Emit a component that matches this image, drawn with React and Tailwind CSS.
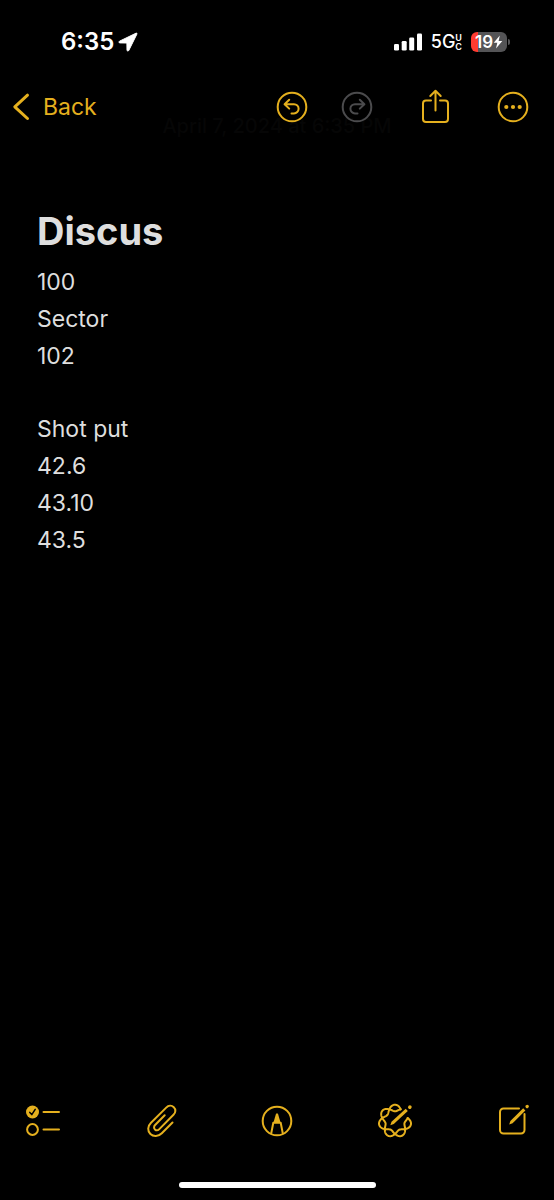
import React from "react";

const round = {
  fill: "none",
  stroke: "currentColor",
  strokeLinecap: "round",
  strokeLinejoin: "round",
  "aria-hidden": true,
};

// One strand of the braided ring; angles run clockwise from the top.
function strand(sign) {
  const points = [];
  for (let deg = 77; deg <= 386; deg += 3) {
    const t = (deg * Math.PI) / 180;
    const r = 13 + sign * 3.3 * Math.cos(3.5 * t);
    points.push(`${(18 + r * Math.sin(t)).toFixed(2)} ${(18 - r * Math.cos(t)).toFixed(2)}`);
  }
  return `M${points.join("L")}`;
}

function StatusBar() {
  return (
    <div className="flex h-20 items-center pt-1 pr-11 pl-[61px] text-white">
      <span className="text-2xl leading-6 font-semibold">6:35</span>
      <svg className="ml-1 size-5" viewBox="0 0 20 20" fill="currentColor" stroke="currentColor" strokeLinejoin="round" aria-hidden="true">
        <path d="M18 1.200 1.500 9.200c-.9.500-.7 1.700.4 1.700l7 .1.100 7.100c0 1.100 1.300 1.300 1.800.3L18.900 2.100C19.200 1.400 18.700.900 18 1.200Z" />
      </svg>
      <div className="ml-auto flex items-center">
        <svg className="h-5 w-7" viewBox="0 0 28 20" fill="currentColor" aria-label="Signal strength">
          <rect x="0" y="12" width="5" height="6.500" rx="1.300" />
          <rect x="7.700" y="9" width="5" height="9.500" rx="1.300" />
          <rect x="15.200" y="5.500" width="5" height="13" rx="1.300" />
          <rect x="23" y="1.500" width="5" height="17" rx="1.300" />
        </svg>
        <span className="ml-[9px] text-lg leading-5 font-medium">5G</span>
        <span className="flex flex-col text-[9px] leading-[9px] font-semibold">
          <span>U</span>
          <span>C</span>
        </span>
        <span className="ml-[9px] flex h-5 w-9 items-center justify-center rounded-md bg-linear-to-r from-[#ff3b30] from-20% to-[#545456] to-20% text-[17px] leading-5 font-semibold">
          19
          <svg className="h-4 w-[10px]" viewBox="0 0 10 16" fill="currentColor" aria-hidden="true">
            <path d="M6.800 1.500.700 8.700h3.600L3 14.500l6.300-7.400H5.600Z" />
          </svg>
        </span>
        <span className="ml-px h-[6px] w-[2px] rounded-r-full bg-[#545456]" />
      </div>
    </div>
  );
}

function NavBar() {
  return (
    <header className="flex h-[54px] items-center pr-[25px] pl-3">
      <button type="button" className="flex items-center gap-[13px] text-[23px] leading-8">
        <svg className="h-7 w-[18px]" viewBox="0 0 18 28" strokeWidth="3" {...round}>
          <path d="M15.500 2.200 2.800 13.800 15.500 25.500" />
        </svg>
        Back
      </button>
      <button type="button" aria-label="Undo" className="ml-auto">
        <svg className="size-8" viewBox="0 0 32 32" strokeWidth="2" {...round}>
          <circle cx="16" cy="16" r="14.300" />
          <path d="M13.200 8.800 8.600 13.200 13.200 17.600M9.200 13.200H18a4.600 4.600 0 0 1 0 9.200h-2.500" />
        </svg>
      </button>
      <button type="button" aria-label="Redo" disabled className="ml-[33px] text-[#4b4b4d]">
        <svg className="size-8" viewBox="0 0 32 32" strokeWidth="2" {...round}>
          <circle cx="16" cy="16" r="14.300" />
          <path d="M18.800 8.800 23.400 13.200 18.800 17.600M22.800 13.200H14a4.600 4.600 0 0 0 0 9.200h2.500" />
        </svg>
      </button>
      <button type="button" aria-label="Share" className="ml-12">
        <svg className="h-9 w-7" viewBox="0 0 28 36" strokeWidth="2" {...round}>
          <path d="M10 11.500H5A3 3 0 0 0 2 14.500V30A3 3 0 0 0 5 33H24A3 3 0 0 0 27 30V14.500A3 3 0 0 0 24 11.500H19M14.500 21.500V2M9.300 7 14.500 1.800 19.700 7" />
        </svg>
      </button>
      <button type="button" aria-label="More" className="ml-12">
        <svg className="size-8" viewBox="0 0 32 32" strokeWidth="2" {...round}>
          <circle cx="16" cy="16" r="14.300" />
          <g fill="currentColor" stroke="none">
            <circle cx="9.300" cy="16" r="2.100" />
            <circle cx="16" cy="16" r="2.100" />
            <circle cx="22.700" cy="16" r="2.100" />
          </g>
        </svg>
      </button>
    </header>
  );
}

function Note() {
  return (
    <main className="flex-1 px-[37px] text-[23px] leading-[37px] text-[#dedede]">
      <h1 className="mt-[73px] mb-[9px] text-[38px] leading-12 font-bold">Discus</h1>
      <p>100</p>
      <p>Sector</p>
      <p>102</p>
      <p className="mt-9">Shot put</p>
      <p>42.6</p>
      <p>43.10</p>
      <p>43.5</p>
    </main>
  );
}

function BottomBar() {
  return (
    <footer className="flex h-[38px] items-center justify-between px-[25px]">
      <button type="button" aria-label="Checklist">
        <svg className="size-9" viewBox="0 0 36 36" strokeWidth="2" {...round}>
          <circle cx="7.500" cy="9" r="6.500" fill="currentColor" stroke="none" />
          <path d="M4.800 9.400 6.800 11.600 10.200 6.300" stroke="#000" strokeWidth="1.500" />
          <circle cx="7.500" cy="26.500" r="5.400" />
          <path d="M18.500 9H34M18.500 26.500H34" />
        </svg>
      </button>
      <button type="button" aria-label="Attach">
        <svg className="h-9 w-8" viewBox="0 0 32 36" strokeWidth="2" {...round}>
          <path d="M27.500 19.500 16.800 30.300C13.300 33.800 8.500 34 5.400 31 2.300 27.900 2.500 23.200 6 19.700L21.200 4.600C23.500 2.300 26.700 2.200 28.800 4.200 31 6.300 30.800 9.500 28.500 11.800L14.300 26.100C13 27.400 11.100 27.500 9.900 26.400 8.700 25.200 8.800 23.300 10.100 22L19.700 12.300" />
        </svg>
      </button>
      <button type="button" aria-label="Markup">
        <svg className="size-8" viewBox="0 0 32 32" strokeWidth="2" {...round}>
          <circle cx="16" cy="16" r="14.300" />
          <path d="M10.200 28.500 12.300 17.800H19.700L21.800 28.500" />
          <path d="M12.400 17.800 14.800 9.500Q16 7 17.200 9.500L19.600 17.800Z" fill="currentColor" stroke="none" />
        </svg>
      </button>
      <button type="button" aria-label="Writing tools">
        <svg className="size-9" viewBox="0 0 36 36" strokeWidth="2" {...round}>
          <path d={strand(1)} />
          <path d={strand(-1)} />
          <path d="M13.300 22.200 14.500 18.800 28.700 5.700 30.800 7.900 16.800 21Z" fill="currentColor" stroke="none" />
          <path d="m32.800 4.200.1-.1" strokeWidth="3.600" />
        </svg>
      </button>
      <button type="button" aria-label="New note">
        <svg className="h-9 w-8" viewBox="0 0 32 36" strokeWidth="2" {...round}>
          <path d="M22 5.500H6.500A3.500 3.500 0 0 0 3 9V27A3.500 3.500 0 0 0 6.500 30.500H24A3.500 3.500 0 0 0 27.500 27V11" />
          <path d="M12.200 21.500 13.400 18 26.200 5.300 28.400 7.400 15.600 20.200Z" fill="currentColor" stroke="none" />
          <path d="m30.100 3.500.1-.1" strokeWidth="3.200" />
        </svg>
      </button>
    </footer>
  );
}

export default function App() {
  return (
    <div className="flex min-h-screen flex-col bg-black font-['Inter','Liberation_Sans',sans-serif] text-[#e5b01e]">
      <div className="relative">
        <time className="absolute inset-x-0 top-28 text-center text-xl leading-7 font-medium text-[#060606]">
          April 7, 2024 at 6:35 PM
        </time>
        <div className="relative">
          <StatusBar />
          <NavBar />
        </div>
      </div>
      <Note />
      <BottomBar />
      <div className="mx-auto mt-[42px] mb-3 h-[6px] w-[197px] rounded-full bg-white" />
    </div>
  );
}
